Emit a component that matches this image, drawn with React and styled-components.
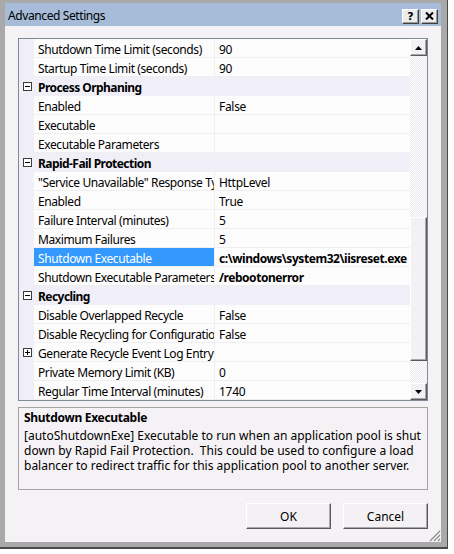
import React from 'react';
import styled, { createGlobalStyle, css } from 'styled-components';

const rows = [
  { kind: 'prop', name: 'Shutdown Time Limit (seconds)', value: '90' },
  { kind: 'prop', name: 'Startup Time Limit (seconds)', value: '90' },
  { kind: 'cat', name: 'Process Orphaning' },
  { kind: 'prop', name: 'Enabled', value: 'False' },
  { kind: 'prop', name: 'Executable', value: '' },
  { kind: 'prop', name: 'Executable Parameters', value: '' },
  { kind: 'cat', name: 'Rapid-Fail Protection' },
  { kind: 'prop', name: '"Service Unavailable" Response Type', value: 'HttpLevel' },
  { kind: 'prop', name: 'Enabled', value: 'True' },
  { kind: 'prop', name: 'Failure Interval (minutes)', value: '5' },
  { kind: 'prop', name: 'Maximum Failures', value: '5' },
  { kind: 'prop', name: 'Shutdown Executable', value: 'c:\\windows\\system32\\iisreset.exe', bold: true, selected: true },
  { kind: 'prop', name: 'Shutdown Executable Parameters', value: '/rebootonerror', bold: true },
  { kind: 'cat', name: 'Recycling' },
  { kind: 'prop', name: 'Disable Overlapped Recycle', value: 'False' },
  { kind: 'prop', name: 'Disable Recycling for Configuration Changes', value: 'False' },
  { kind: 'prop', name: 'Generate Recycle Event Log Entry', value: '', expandable: true },
  { kind: 'prop', name: 'Private Memory Limit (KB)', value: '0' },
  { kind: 'prop', name: 'Regular Time Interval (minutes)', value: '1740' },
];

const GlobalStyle = createGlobalStyle`
  body {
    margin: 0;
    background: #ffffff;
    font-family: 'Noto Sans', 'Open Sans', sans-serif;
  }
`;

const Window = styled.div`
  width: 448px;
  height: 549px;
  box-sizing: border-box;
  background: #a9a9a9;
  padding: 3px 6px 5px 5px;
  border-right: 1px solid #4a4a4a;
  border-bottom: 2px solid #4a4a4a;
  display: flex;
  flex-direction: column;
`;

const TitleBar = styled.div`
  height: 23px;
  background: #a6bcd8;
  display: flex;
  align-items: center;
  padding: 0 3px 0 3px;
  font-size: 12px;
  letter-spacing: -0.4px;
  color: #000;
`;

const Title = styled.span`
  flex: 1;
  padding-top: 1px;
`;

const CaptionButton = styled.button`
  width: 17px;
  height: 15px;
  margin-left: 2px;
  margin-top: 3px;
  padding: 0;
  box-sizing: border-box;
  background: #eceaea;
  border: 1px solid;
  border-color: #ffffff #404040 #404040 #ffffff;
  box-shadow: inset -1px -1px #9a9a9a;
  display: flex;
  align-items: center;
  justify-content: center;
  font-family: 'DejaVu Sans', sans-serif;
  font-weight: bold;
  font-size: 11px;
  line-height: 1;
  color: #000;
`;

const Client = styled.div`
  flex: 1;
  background: #f5f2f5;
  padding: 12px 13px 0 13px;
  display: flex;
  flex-direction: column;
`;

const Grid = styled.div`
  height: 363px;
  box-sizing: border-box;
  border: 1px solid #7f8a94;
  background: #fdfcfd;
  display: flex;
`;

const RowList = styled.div`
  flex: 1;
  display: flex;
  flex-direction: column;
`;

const Row = styled.div`
  height: 19px;
  display: flex;
  font-size: 12px;
  line-height: 17px;
  letter-spacing: -0.4px;
  color: #000;
  ${(p) =>
    p.$cat &&
    css`
      background: #f0eff8;
      font-weight: bold;
      letter-spacing: -0.55px;
    `}
`;

const Gutter = styled.div`
  width: 14px;
  flex: none;
  background: #f0eff8;
  display: flex;
  align-items: center;
  justify-content: center;
  padding-left: 1px;
`;

const Expander = styled.span`
  width: 9px;
  height: 9px;
  box-sizing: border-box;
  border: 1px solid #3c3c3c;
  position: relative;
  background: #fff;
  &::before {
    content: '';
    position: absolute;
    left: 1px;
    right: 1px;
    top: 3px;
    height: 1px;
    background: #000;
  }
  ${(p) =>
    p.$plus &&
    css`
      &::after {
        content: '';
        position: absolute;
        top: 1px;
        bottom: 1px;
        left: 3px;
        width: 1px;
        background: #000;
      }
    `}
`;

const NameCell = styled.div`
  width: 181px;
  flex: none;
  box-sizing: border-box;
  padding: 2px 0 0 4px;
  white-space: nowrap;
  overflow: hidden;
  border-bottom: 1px solid #f0eff0;
  border-right: 1px solid #f0eff0;
  ${(p) =>
    p.$selected &&
    css`
      background: #3399ff;
      color: #ffffff;
    `}
`;

const ValueCell = styled.div`
  flex: 1;
  padding: 2px 0 0 4px;
  white-space: nowrap;
  overflow: hidden;
  border-bottom: 1px solid #f0eff0;
  font-weight: ${(p) => (p.$bold ? 'bold' : 'normal')};
  letter-spacing: ${(p) => (p.$bold ? '-0.45px' : '-0.3px')};
`;

const CatLabel = styled.div`
  flex: 1;
  padding: 2px 0 0 4px;
  white-space: nowrap;
`;

const ScrollBar = styled.div`
  width: 17px;
  flex: none;
  display: flex;
  flex-direction: column;
  background: repeating-conic-gradient(#ffffff 0 25%, #ebe7eb 0 50%) 0 0 / 2px 2px;
`;

const raised = css`
  box-sizing: border-box;
  background: #f4f1f4;
  border: 1px solid;
  border-color: #ffffff #5a5a5a #5a5a5a #ffffff;
  box-shadow: inset -1px -1px #a8a8a8;
`;

const ArrowButton = styled.div`
  ${raised};
  height: 17px;
  flex: none;
  display: flex;
  align-items: center;
  justify-content: center;
`;

const Track = styled.div`
  flex: 1;
  display: flex;
  flex-direction: column;
  padding-top: 161px;
`;

const Thumb = styled.div`
  ${raised};
  height: 144px;
`;

const Description = styled.div`
  margin-top: 6px;
  height: 83px;
  box-sizing: border-box;
  border: 1px solid #a3a3a3;
  padding: 2px 5px;
  font-size: 12px;
  line-height: 15px;
  color: #000;
`;

const DescTitle = styled.div`
  font-weight: bold;
  letter-spacing: -0.3px;
  margin-bottom: 3px;
`;

const Footer = styled.div`
  display: flex;
  justify-content: flex-end;
  gap: 12px;
  margin-top: 13px;
  position: relative;
  flex: 1;
`;

const DialogButton = styled.button`
  ${raised};
  width: 85px;
  height: 26px;
  font-family: 'Noto Sans', 'Open Sans', sans-serif;
  font-size: 12px;
  color: #000;
  padding: 0;
`;

const Grip = styled.svg`
  position: absolute;
  right: -13px;
  bottom: 0;
`;

function Arrow({ up }) {
  return (
    <svg width="7" height="4" viewBox="0 0 7 4">
      <path d={up ? 'M3.5 0 L7 4 L0 4 Z' : 'M0 0 L7 0 L3.5 4 Z'} fill="#000" />
    </svg>
  );
}

function App() {
  return (
    <>
      <GlobalStyle />
      <Window>
        <TitleBar>
          <Title>Advanced Settings</Title>
          <CaptionButton>?</CaptionButton>
          <CaptionButton>
            <svg width="9" height="8" viewBox="0 0 9 8">
              <path d="M1 0.5 L8 7.5 M8 0.5 L1 7.5" stroke="#000" strokeWidth="2" />
            </svg>
          </CaptionButton>
        </TitleBar>
        <Client>
          <Grid>
            <RowList>
              {rows.map((r, i) =>
                r.kind === 'cat' ? (
                  <Row key={i} $cat>
                    <Gutter>
                      <Expander />
                    </Gutter>
                    <CatLabel>{r.name}</CatLabel>
                  </Row>
                ) : (
                  <Row key={i}>
                    <Gutter>{r.expandable && <Expander $plus />}</Gutter>
                    <NameCell $selected={r.selected}>{r.name}</NameCell>
                    <ValueCell $bold={r.bold}>{r.value}</ValueCell>
                  </Row>
                )
              )}
            </RowList>
            <ScrollBar>
              <ArrowButton>
                <Arrow up />
              </ArrowButton>
              <Track>
                <Thumb />
              </Track>
              <ArrowButton>
                <Arrow />
              </ArrowButton>
            </ScrollBar>
          </Grid>
          <Description>
            <DescTitle>Shutdown Executable</DescTitle>
            [autoShutdownExe] Executable to run when an application pool is shut down by Rapid
            Fail Protection.&nbsp; This could be used to configure a load balancer to redirect
            traffic for this application pool to another server.
          </Description>
          <Footer>
            <DialogButton>OK</DialogButton>
            <DialogButton>Cancel</DialogButton>
            <Grip width="13" height="13" viewBox="0 0 13 13">
              <path d="M12 2 L2 12 M12 6 L6 12 M12 10 L10 12" stroke="#8a8a8a" strokeWidth="1.2" />
            </Grip>
          </Footer>
        </Client>
      </Window>
    </>
  );
}

export default App;
